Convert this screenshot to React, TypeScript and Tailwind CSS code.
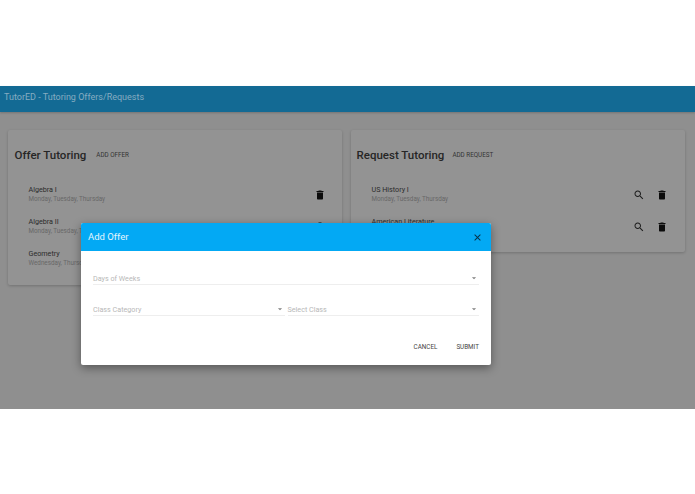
import React from "react";

const font = { fontFamily: "Roboto, sans-serif" };

function Trash() {
  return (
    <svg viewBox="0 0 24 24" className="w-[12px] h-[12px] fill-[#0c0c0c]">
      <path d="M6 19c0 1.1.9 2 2 2h8c1.1 0 2-.9 2-2V7H6v12zM19 4h-3.5l-1-1h-5l-1 1H5v2h14V4z" />
    </svg>
  );
}
function Search() {
  return (
    <svg viewBox="0 0 24 24" className="w-[12px] h-[12px] fill-[#1c1c1c]">
      <path d="M15.5 14h-.79l-.28-.27C15.41 12.59 16 11.11 16 9.5 16 5.91 13.09 3 9.5 3S3 5.91 3 9.5 5.91 16 9.5 16c1.61 0 3.09-.59 4.23-1.57l.27.28v.79l5 4.99L20.49 19l-4.99-5zm-6 0C7.01 14 5 11.99 5 9.5S7.01 5 9.5 5 14 7.01 14 9.5 11.99 14 9.5 14z" />
    </svg>
  );
}
function Caret() {
  return (
    <svg viewBox="0 0 24 24" className="w-[10px] h-[10px] fill-[#808080] shrink-0 mb-[1px]">
      <path d="M7 10l5 5 5-5z" />
    </svg>
  );
}

function Row({ title, sub, search }: { title: string; sub: string; search?: boolean }) {
  return (
    <div className={"h-[32px] flex items-center pl-[20.5px] " + (search ? "pr-[17.5px]" : "pr-[16.5px]")}>
      <div className="flex-1 min-w-0 whitespace-nowrap pb-[2px]">
        <div className="text-[7.2px] leading-[10px] text-[#2b2b2b]">{title}</div>
        <div className="text-[6.3px] leading-[8px] text-[#686868]">{sub}</div>
      </div>
      {search && <div className="mr-[11px] flex"><Search /></div>}
      <Trash />
    </div>
  );
}

function Card({ title, action, children, className, headClass, titleClass }: { title: string; action: string; children: React.ReactNode; className: string; headClass: string; titleClass: string }) {
  return (
    <div className={"flex-1 self-start bg-[#939393] rounded-[2px] shadow-[0_1px_3px_rgba(0,0,0,0.2)] " + className}>
      <div className={"flex items-center h-[49px] pt-[2px] " + headClass}>
        <span className={"text-[11.5px] font-medium text-[#262626] whitespace-nowrap " + titleClass}>{title}</span>
        <span className="text-[6.3px] text-[#333333] whitespace-nowrap">{action}</span>
      </div>
      <div>{children}</div>
    </div>
  );
}

function Field({ label, className }: { label: string; className?: string }) {
  return (
    <div className={"flex items-end h-[15px] border-b border-[#eeeeee] " + (className ?? "")}>
      <span className="flex-1 text-[7.2px] leading-[11px] text-[#b8b8b8] whitespace-nowrap">{label}</span>
      <Caret />
    </div>
  );
}

export default function App() {
  return (
    <div style={font} className="relative w-[695px] h-[494px] bg-white overflow-hidden antialiased">
      <div className="h-[86px]" />
      <div className="h-[323px] bg-[#8f8f8f]">
        <div className="h-[26px] bg-[#136a94] flex items-center pl-[4px] pb-[2px] shadow-[0_1px_2px_rgba(0,0,0,0.2)]">
          <span className="text-[9px] text-[#86acc1]">TutorED - Tutoring Offers/Requests</span>
        </div>
        <div className="flex gap-[9px] px-[8px] pt-[18px] pr-[10px]">
          <Card title="Offer Tutoring" action="ADD OFFER" className="h-[155px]" headClass="pl-[6.5px]" titleClass="mr-[10px]">
            <Row title="Algebra I" sub="Monday, Tuesday, Thursday" />
            <Row title="Algebra II" sub="Monday, Tuesday, Thursday" />
            <Row title="Geometry" sub="Wednesday, Thursday" />
          </Card>
          <Card title="Request Tutoring" action="ADD REQUEST" className="h-[122px]" headClass="pl-[5.5px]" titleClass="mr-[8px]">
            <Row title="US History I" sub="Monday, Tuesday, Thursday" search />
            <Row title="American Literature" sub="Monday, Tuesday, Thursday" search />
          </Card>
        </div>
      </div>

      <div className="absolute left-[81px] top-[223px] w-[410px] h-[142px] bg-white rounded-[2px] shadow-[0_3px_10px_rgba(0,0,0,0.4)] flex flex-col">
        <div className="h-[28px] bg-[#03a9f4] rounded-t-[2px] flex items-center pl-[7px] pr-[8px]">
          <span className="flex-1 text-[9.5px] text-[#e4f5fd]">Add Offer</span>
          <svg viewBox="0 0 24 24" className="w-[11px] h-[11px] fill-[#0a2f44]">
            <path d="M19 6.41 17.59 5 12 10.59 6.41 5 5 6.41 10.59 12 5 17.59 6.41 19 12 13.41 17.59 19 19 17.59 13.41 12z" />
          </svg>
        </div>
        <div className="px-[12px] pt-[19px]">
          <Field label="Days of Weeks" />
          <div className="flex gap-[3px] mt-[16px]">
            <Field label="Class Category" className="flex-1" />
            <Field label="Select Class" className="flex-1" />
          </div>
        </div>
        <div className="flex justify-end gap-[19px] pr-[12px] mt-[27px]">
          <span className="text-[6.3px] text-[#444444]">CANCEL</span>
          <span className="text-[6.3px] text-[#444444]">SUBMIT</span>
        </div>
      </div>
    </div>
  );
}
